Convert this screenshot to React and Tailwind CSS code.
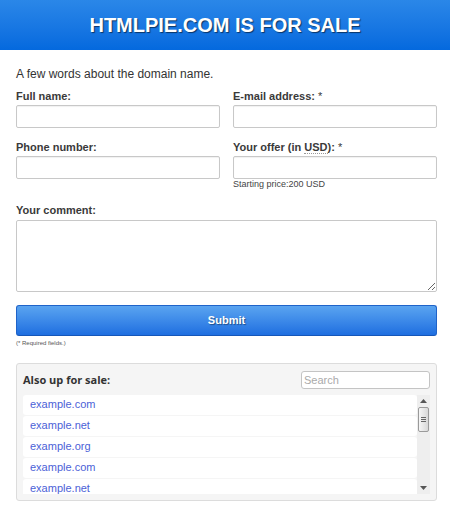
import { useState } from "react";

const domains = ["example.com", "example.net", "example.org", "example.com", "example.net"];

function Field({ label, required, children }) {
  return (
    <div>
      <label className="block h-[13px] mb-[2px] text-[11px] leading-[13px] font-bold text-[#3a3a3a]">
        {label}
        {required && <span className="font-normal"> *</span>}
      </label>
      {children}
    </div>
  );
}

const inputCls =
  "block w-full h-[23px] px-2 text-[12px] border border-[#c8c8c8] rounded-[2px] bg-white shadow-[inset_0_1px_1px_rgba(0,0,0,0.06)] outline-none";

export default function App() {
  const [search, setSearch] = useState("");

  return (
    <div className="w-[450px] min-h-[511px] bg-white font-['Liberation_Sans',Arial,sans-serif] text-[#333]">
      {/* Header */}
      <div className="h-[50px] flex items-center justify-center bg-gradient-to-b from-[#2a87e8] to-[#0469de]">
        <h1 className="text-[20px] font-bold text-white [text-shadow:1px_1px_1px_rgba(0,0,0,0.55)]">
          HTMLPIE.COM IS FOR SALE
        </h1>
      </div>

      <div className="pl-4 pr-[13px]">
        <p className="mt-[17px] h-[14px] text-[12px] leading-[14px] text-[#333]">
          A few words about the domain name.
        </p>

        {/* Form */}
        <div className="mt-[9px] grid grid-cols-2 gap-x-[13px] gap-y-[13px]">
          <Field label="Full name:">
            <input className={inputCls} />
          </Field>
          <Field label="E-mail address:" required>
            <input className={inputCls} />
          </Field>
          <Field label="Phone number:">
            <input className={inputCls} />
          </Field>
          <div>
            <label className="block h-[13px] mb-[2px] text-[11px] leading-[13px] font-bold text-[#3a3a3a]">
              Your offer (in{" "}
              <abbr className="no-underline border-b border-dotted border-[#999]">USD</abbr>):
              <span className="font-normal"> *</span>
            </label>
            <input className={inputCls} />
            <p className="h-[11px] text-[9px] leading-[11px] text-[#444]">Starting price:200 USD</p>
          </div>
        </div>

        <div className="mt-[14px]">
          <label className="block h-[13px] mb-[3px] text-[11px] leading-[13px] font-bold text-[#3a3a3a]">
            Your comment:
          </label>
          <textarea className="block w-full h-[72px] border border-[#c8c8c8] rounded-[2px] bg-white resize-y outline-none" />
        </div>

        <button className="mt-[13px] block w-full h-[31px] rounded-[3px] border border-[#1f63c9] border-b-[#1556b8] bg-gradient-to-b from-[#5aa4f0] to-[#1e6ee0] text-white text-[11px] font-bold [text-shadow:1px_1px_1px_rgba(0,0,0,0.4)]">
          Submit
        </button>
        <p className="mt-[3px] h-[8px] text-[6px] leading-[8px] text-[#555]">(* Required fields.)</p>

        {/* Also up for sale */}
        <div className="mt-[16px] border border-[#dcdcdc] rounded-[3px] bg-[#f5f5f5] px-[6px] pt-[7px] pb-[6px]">
          <div className="flex items-center justify-between h-[18px]">
            <span className="font-['Open_Sans',sans-serif] text-[11px] font-bold text-[#333]">
              Also up for sale:
            </span>
            <input
              value={search}
              onChange={(e) => setSearch(e.target.value)}
              placeholder="Search"
              className="w-[129px] h-[18px] px-[2px] text-[11px] border border-[#c4c4c4] rounded-[3px] bg-white placeholder:text-[#aaa] outline-none"
            />
          </div>
          <div className="mt-[6px] flex h-[99px]">
            <ul className="flex-1 overflow-hidden flex flex-col gap-[1px]">
              {domains
                .filter((d) => d.includes(search))
                .map((d, i) => (
                  <li key={i} className="shrink-0 h-[20px] rounded-[3px] bg-white pl-[7px] text-[11px] leading-[19px]">
                    <a href="#" className="text-[#4c5fd7]">
                      {d}
                    </a>
                  </li>
                ))}
            </ul>
            {/* scrollbar */}
            <div className="w-[13px] bg-[#eeeeee] flex flex-col items-center">
              <div className="h-[12px] flex items-center justify-center">
                <svg width="7" height="4" viewBox="0 0 7 4"><path d="M0 4 L3.5 0 L7 4 Z" fill="#555" /></svg>
              </div>
              <div className="w-[11px] h-[25px] rounded-[2px] border border-[#9a9a9a] bg-gradient-to-r from-[#f6f6f6] to-[#d8d8d8] flex flex-col items-center justify-center gap-[1px]">
                <span className="block w-[5px] h-[1px] bg-[#666]" />
                <span className="block w-[5px] h-[1px] bg-[#666]" />
                <span className="block w-[5px] h-[1px] bg-[#666]" />
              </div>
              <div className="flex-1" />
              <div className="h-[12px] flex items-center justify-center">
                <svg width="7" height="4" viewBox="0 0 7 4"><path d="M0 0 L3.5 4 L7 0 Z" fill="#555" /></svg>
              </div>
            </div>
          </div>
        </div>
      </div>
    </div>
  );
}
